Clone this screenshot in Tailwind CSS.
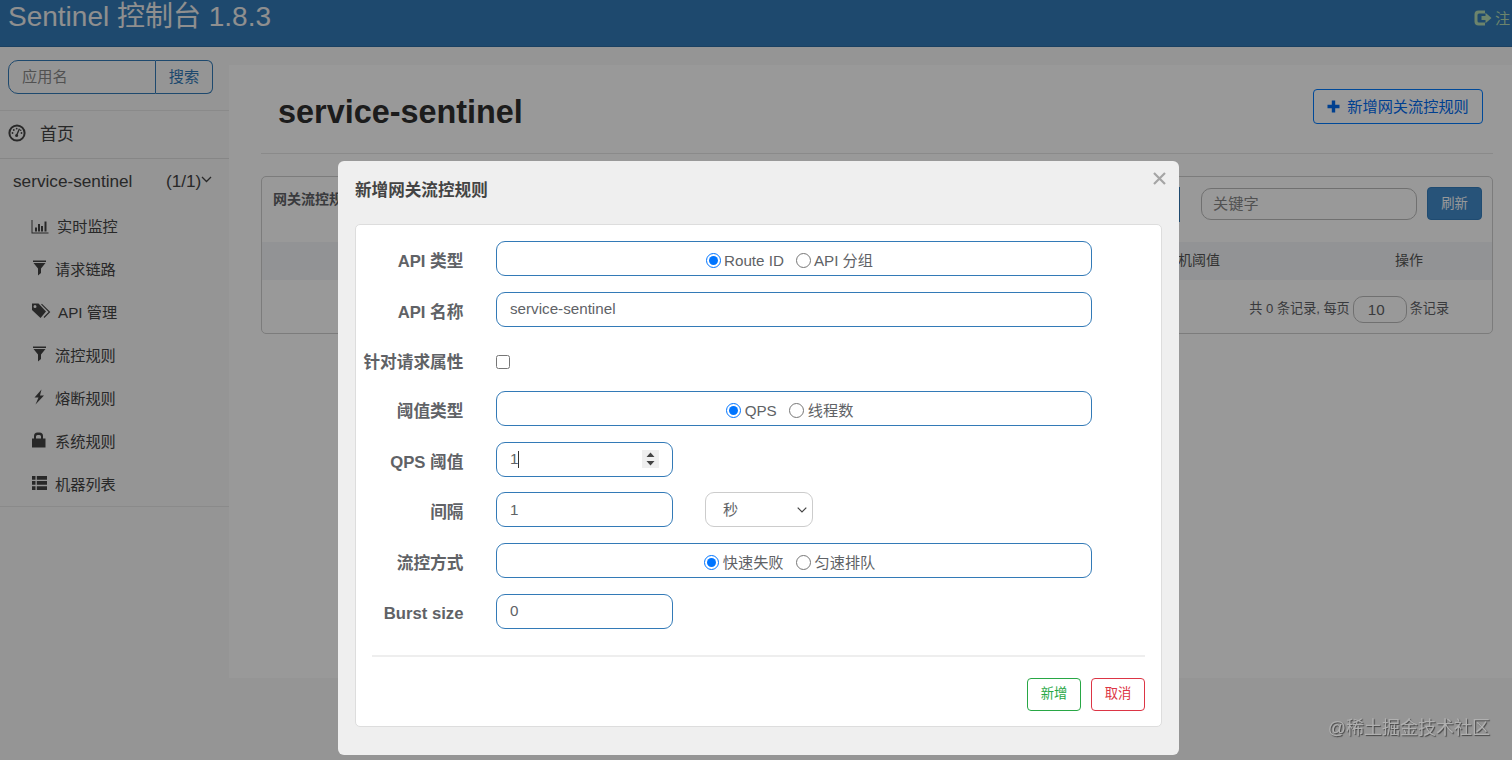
<!DOCTYPE html>
<html lang="zh-CN">
<head>
    <meta charset="UTF-8">
    <meta name="viewport" content="width=device-width, initial-scale=1.0">
    <title>Sentinel 控制台</title>
    <script src="https://cdn.jsdelivr.net/npm/@tailwindcss/browser@4"></script>
</head>
<body class="bg-[#f8f8f8] h-[760px] overflow-hidden font-['Liberation_Sans','Noto_Sans_CJK_SC',sans-serif] text-[15.2px] text-[#606266]">

    <!-- Top bar -->
    <header class="h-[47px] bg-[#337ab7] border-b border-[#2e6da4] flex justify-between overflow-hidden whitespace-nowrap">
        <span class="pl-2 text-[28px] leading-[34px] text-[#eeeeee]">Sentinel 控制台 1.8.3</span>
        <a class="w-[38px] pt-[7px] flex items-start text-[#b4dcb4] leading-[24px]">
            <svg class="w-[18px] h-[16px] mt-[3px] mr-[3px] shrink-0" viewBox="0 0 18 16" fill="currentColor">
                <path d="M11 0.5H4.5A4 4 0 0 0 0.5 4.5v7a4 4 0 0 0 4 4H11v-3H5A1.5 1.5 0 0 1 3.500 11V5A1.500 1.500 0 0 1 5 3.500h6z"/>
                <path d="M11.500 2.800L17.500 8l-6 5.200V10H7.500V6h4z"/>
            </svg>
            <span>注</span>
        </a>
    </header>

    <div class="flex">
        <!-- Sidebar -->
        <aside class="w-[229px] shrink-0 text-[#444444]">
            <div class="h-[64px] pl-2 pt-[13px] border-b border-[#e7e7e7]">
                <div class="flex h-[34px] w-[205px]">
                    <div class="w-[148px] border border-[#337ab7] rounded-l-[10px] pl-[13px] leading-[32px] text-[#888888]">应用名</div>
                    <button class="flex-1 border border-l-0 border-[#337ab7] rounded-r-md text-[#337ab7] leading-[32px]">搜索</button>
                </div>
            </div>
            <div class="h-[48px] border-b border-[#e0e0e0] flex items-center pl-2 text-[17px]">
                <svg class="w-[18px] h-[18px] mr-[14px] -mt-[3px]" viewBox="0 0 18 18">
                    <circle cx="9" cy="9" r="7.600" fill="none" stroke="currentColor" stroke-width="2"/>
                    <path d="M8.500 11.500L11.500 4.800" stroke="currentColor" stroke-width="1.400"/>
                    <circle cx="8.600" cy="11.500" r="1.500" fill="currentColor"/>
                    <g fill="currentColor"><circle cx="4.500" cy="9" r=".9"/><circle cx="5.800" cy="6" r=".9"/><circle cx="8.700" cy="4.600" r=".9"/><circle cx="13.500" cy="9" r=".9"/><circle cx="12.700" cy="6.300" r=".8"/></g>
                </svg>
                <span>首页</span>
            </div>
            <div class="h-[45px] flex items-center pl-[13px] text-[17.200px]">
                <span class="w-[153px] pt-px">service-sentinel</span>
                <span class="pt-px">(1/1)</span>
                <svg class="w-[11px] h-[7px] -mt-[4px]" viewBox="0 0 11 7" fill="none" stroke="currentColor" stroke-width="1.300"><path d="M1 1l4.500 4.500L10 1"/></svg>
            </div>
            <ul class="border-b border-[#e7e7e7] h-[303px]">
                <li class="h-[43px] flex items-center pl-[31px] pt-[3px]">
                    <svg class="w-[18px] h-[15px] mr-2 -mt-[2px]" viewBox="0 0 18 15" fill="currentColor"><path d="M.5 1h1v12.500H17.500v1H.5zM4 8.500h2v4H4zM7 5h2v7.500H7zM10 7h2v5.500h-2zM13.500 2.500h2v10h-2z"/></svg>
                    <span>实时监控</span>
                </li>
                <li class="h-[43px] flex items-center pl-[31px] pt-[3px]">
                    <svg class="w-[16px] h-[16px] mr-2 -mt-[4px]" viewBox="0 0 16 16" fill="currentColor"><path d="M2 0.500h13v1.500H2zM2.500 3h12L10 8.500V13l-3 2.500v-7z"/></svg>
                    <span>请求链路</span>
                </li>
                <li class="h-[43px] flex items-center pl-[31px] pt-[3px]">
                    <svg class="w-[20px] h-[16px] mr-[7px] -mt-[4px]" viewBox="0 0 20 16" fill="currentColor"><path fill-rule="evenodd" d="M1 .5h6.500L15 8.500 9.500 15 1 7zM4 2a1.500 1.500 0 1 0 0 3 1.500 1.500 0 0 0 0-3z"/><path d="M10.500 1.200l8 7.800-5.500 5.500" fill="none" stroke="currentColor" stroke-width="1.100"/></svg>
                    <span>API 管理</span>
                </li>
                <li class="h-[43px] flex items-center pl-[31px] pt-[3px]">
                    <svg class="w-[16px] h-[16px] mr-2 -mt-[4px]" viewBox="0 0 16 16" fill="currentColor"><path d="M2 0.500h13v1.500H2zM2.500 3h12L10 8.500V13l-3 2.500v-7z"/></svg>
                    <span>流控规则</span>
                </li>
                <li class="h-[43px] flex items-center pl-[31px] pt-[3px]">
                    <svg class="w-[16px] h-[16px] mr-2 -mt-[4px]" viewBox="0 0 16 16" fill="currentColor"><path d="M10.500 .5L3.500 8.500h4L4.500 15.500 13 6.500H9z"/></svg>
                    <span>熔断规则</span>
                </li>
                <li class="h-[43px] flex items-center pl-[31px] pt-[3px]">
                    <svg class="w-[16px] h-[16px] mr-2 -mt-[4px]" viewBox="0 0 16 16" fill="currentColor"><path fill-rule="evenodd" d="M1 6.500h2V4a3.500 3.500 0 0 1 3.500-3.500h2A3.500 3.500 0 0 1 12 4v2.500h2.500v9H1zM5 6.500h5V4.500A1.500 1.500 0 0 0 8.500 3h-2A1.500 1.500 0 0 0 5 4.500z"/></svg>
                    <span>系统规则</span>
                </li>
                <li class="h-[43px] flex items-center pl-[31px] pt-[3px]">
                    <svg class="w-[16px] h-[16px] mr-2 -mt-[4px]" viewBox="0 0 16 16" fill="currentColor"><path d="M1 1h3.500v3.800H1zM5.800 1H16v3.800H5.800zM1 6h3.500v3.800H1zM5.800 6H16v3.800H5.800zM1 11.200h3.500V15H1zM5.800 11.200H16V15H5.800z"/></svg>
                    <span>机器列表</span>
                </li>
            </ul>
        </aside>

        <!-- Main -->
        <main class="flex-1 mt-[18px] h-[613px] bg-white pl-8 pr-[19px]">
            <div class="h-[89px] border-b border-[#e7e7e7] flex justify-between pl-[17px] pr-[10px]">
                <h1 class="text-[32.400px] leading-[36px] pt-[29px] font-bold text-[#2f2f2f]">service-sentinel</h1>
                <button class="mt-6 h-[35px] w-[170px] border border-[#007bff] rounded-[4px] text-[#006bf0] flex items-center justify-center">
                    <svg class="w-[13px] h-[13px] mr-[7px]" viewBox="0 0 13 13" fill="currentColor"><path d="M4.800 0.500h3.400v4.300h4.300v3.400H8.200v4.300H4.800V8.200H.5V4.800h4.300z"/></svg>
                    <span class="pt-px">新增网关流控规则</span>
                </button>
            </div>

            <div class="mt-[22px] h-[158px] border border-[#cfcfcf] rounded-[5px] text-[14px]">
                <div class="h-[65px] flex justify-between pl-[11px] pr-[10px] pt-[10px]">
                    <span class="font-bold pt-[2px]">网关流控规则</span>
                    <div class="flex">
                        <div class="w-[120px] h-[35px] mr-[21px] border border-[#337ab7]"></div>
                        <div class="w-[216px] h-[32px] mt-px mr-[10px] border border-[#bbbbbb] rounded-[10px] pl-[11px] leading-[30px] text-[15.2px] text-[#888888]">关键字</div>
                        <button class="w-[55px] h-[33px] bg-[#428bca] border border-[#357ebd] rounded-[4px] text-white text-[13.300px]">刷新</button>
                    </div>
                </div>
                <div class="h-[38px] bg-[#f3f6f8] flex items-center pb-[2px] text-[#555555]">
                    <span class="ml-[902px] w-[231px]">单机阈值</span>
                    <span>操作</span>
                </div>
                <div class="h-[55px] flex items-center justify-end pr-[43px] pt-[3px] text-[13.100px]">
                    <span>共 0 条记录, 每页</span>
                    <span class="w-[54px] h-[27px] mx-[3px] border border-[#bbbbbb] rounded-[10px] pl-[14px] text-[15.2px] leading-[26px]">10</span>
                    <span>条记录</span>
                </div>
            </div>
        </main>
    </div>

    <!-- Dimmed backdrop -->
    <div class="fixed inset-0 bg-black/40"></div>

    <!-- Dialog -->
    <div class="absolute left-[338px] top-[161px] w-[841px] h-[594px] bg-[#efefef] rounded-md pl-[17px] pr-[17px]">
        <div class="h-[63px] flex justify-between -mr-[4px]">
            <h2 class="pt-[17px] text-[16.600px] font-bold leading-[25px] text-[#444444]">新增网关流控规则</h2>
            <svg class="w-[13px] h-[13px] mt-[11px]" viewBox="0 0 13 13" stroke="#a5a5a5" stroke-width="2.200"><path d="M1 1l11 11M12 1L1 12"/></svg>
        </div>

        <div class="h-[503px] bg-white border border-[#dddddd] rounded-[5px] pt-4 px-4">
            <form class="space-y-[15.700px]">
                <div class="flex h-[35px]">
                    <label class="w-[91.500px] mr-[32.500px] text-right text-[16.700px] font-bold leading-[41px] whitespace-nowrap">API 类型</label>
                    <div class="w-[596px] border border-[#337ab7] rounded-[9px] flex items-center justify-center pt-[6px] pr-[9px]">
                        <input type="radio" name="api" checked class="w-[15px] h-[15px] -mt-[3px] mr-[3px]"><span>Route ID</span>
                        <input type="radio" name="api" class="w-[15px] h-[15px] -mt-[3px] ml-[12px] mr-[3px]"><span>API 分组</span>
                    </div>
                </div>
                <div class="flex h-[35px]">
                    <label class="w-[91.500px] mr-[32.500px] text-right text-[16.700px] font-bold leading-[41px] whitespace-nowrap">API 名称</label>
                    <input type="text" value="service-sentinel" class="w-[596px] border border-[#337ab7] rounded-[9px] pl-[13px]">
                </div>
                <div class="flex h-[33px]">
                    <label class="w-[91.500px] mr-[32.500px] flex justify-end text-[16.700px] font-bold leading-[41px] whitespace-nowrap">针对请求属性</label>
                    <input type="checkbox" class="w-[14px] h-[14px] mt-[13px]">
                </div>
                <div class="flex h-[35px]">
                    <label class="w-[91.500px] mr-[32.500px] text-right text-[16.700px] font-bold leading-[41px] whitespace-nowrap">阈值类型</label>
                    <div class="w-[596px] border border-[#337ab7] rounded-[9px] flex items-center justify-center pt-[6px] pr-[9px]">
                        <input type="radio" name="grade" checked class="w-[15px] h-[15px] -mt-[3px] mr-[4px]"><span>QPS</span>
                        <input type="radio" name="grade" class="w-[15px] h-[15px] -mt-[3px] ml-[12px] mr-[4px]"><span>线程数</span>
                    </div>
                </div>
                <div class="flex h-[35px]">
                    <label class="w-[91.500px] mr-[32.500px] text-right text-[16.700px] font-bold leading-[41px] whitespace-nowrap">QPS 阈值</label>
                    <div class="w-[177px] border border-[#337ab7] rounded-[9px] flex items-center pl-[13px] pr-[13px]">
                        <span>1</span>
                        <span class="w-px h-[17px] bg-[#333333]"></span>
                        <svg class="w-[17px] h-[18px] ml-auto" viewBox="0 0 17 18"><path d="M0 0h17v18H0z" fill="#efefef"/><path d="M4.500 7l4-4.500 4 4.500zM4.500 11l4 4.500 4-4.500z" fill="#444444"/></svg>
                    </div>
                </div>
                <div class="flex h-[35px]">
                    <label class="w-[91.500px] mr-[32.500px] text-right text-[16.700px] font-bold leading-[41px] whitespace-nowrap">间隔</label>
                    <input type="text" value="1" class="w-[177px] border border-[#337ab7] rounded-[9px] pl-[13px]">
                    <div class="ml-8 w-[108px] border border-[#cccccc] rounded-[9px] flex items-center justify-between pl-[17px] pr-[5px]">
                        <span>秒</span>
                        <svg class="w-[10px] h-[6px]" viewBox="0 0 10 6" fill="none" stroke="#444444" stroke-width="1.200"><path d="M.7.7L5 5 9.300.7"/></svg>
                    </div>
                </div>
                <div class="flex h-[35px]">
                    <label class="w-[91.500px] mr-[32.500px] text-right text-[16.700px] font-bold leading-[41px] whitespace-nowrap">流控方式</label>
                    <div class="w-[596px] border border-[#337ab7] rounded-[9px] flex items-center justify-center pt-[6px] pr-[9px]">
                        <input type="radio" name="behavior" checked class="w-[15px] h-[15px] -mt-[3px] mr-[4px]"><span>快速失败</span>
                        <input type="radio" name="behavior" class="w-[15px] h-[15px] -mt-[3px] ml-[12px] mr-[4px]"><span>匀速排队</span>
                    </div>
                </div>
                <div class="flex h-[35px]">
                    <label class="w-[91.500px] mr-[32.500px] text-right text-[16.700px] font-bold leading-[40px] whitespace-nowrap">Burst size</label>
                    <input type="text" value="0" class="w-[177px] border border-[#337ab7] rounded-[9px] pl-[13px]">
                </div>
            </form>

            <div class="mt-[26px] border-t-2 border-[#eeeeee] pt-[21px] flex justify-end gap-[10px] text-[13.300px]">
                <button class="w-[54px] h-[33px] border border-[#28a745] rounded-[4px] text-[#28a745]">新增</button>
                <button class="w-[54px] h-[33px] border border-[#dc3545] rounded-[4px] text-[#dc3545]">取消</button>
            </div>
        </div>
    </div>

    <!-- Watermark -->
    <div class="absolute right-[22px] top-[715px] text-[18px] leading-[27px] whitespace-nowrap text-[#b0b0b0] [text-shadow:1px_1px_1px_#444444]">@稀土掘金技术社区</div>

</body>
</html>
